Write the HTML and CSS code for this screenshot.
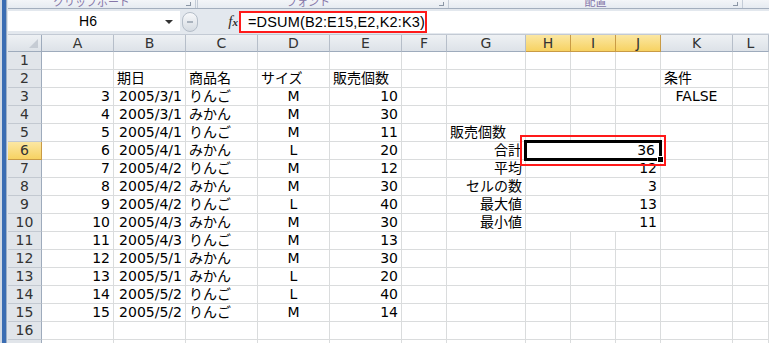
FILE: index.html
```html
<!DOCTYPE html>
<html lang="ja">
<head>
    <meta charset="UTF-8">
    <title>DSUM</title>
    <link rel="stylesheet" href="styles.css">
</head>
<body>
<div class="window">
    <div class="edge"></div>
    <div class="main">
        <!-- リボンの下端（グループ名が半分見えている） -->
        <div class="ribbon">
            <div class="group g1"><span class="label">クリップボード</span><span class="launcher"></span></div>
            <div class="group g2"><span class="label">フォント</span><span class="launcher"></span></div>
            <div class="group g3"><span class="label">配置</span><span class="launcher"></span></div>
            <div class="group g4"></div>
        </div>

        <!-- 数式バー -->
        <div class="fbar">
            <div class="namebox">H6<span class="arrow"></span></div>
            <div class="knob"><span></span></div>
            <div class="fx"><i>f</i><i class="x">x</i></div>
            <div class="formula">=DSUM(B2:E15,E2,K2:K3)<span class="callout"></span></div>
        </div>

        <!-- シート -->
        <div class="sheet">
            <div class="corner"></div><div class="hd">A</div><div class="hd">B</div><div class="hd">C</div><div class="hd">D</div><div class="hd">E</div><div class="hd">F</div><div class="hd">G</div><div class="hd sel">H</div><div class="hd sel">I</div><div class="hd sel">J</div><div class="hd">K</div><div class="hd">L</div>

            <div class="rh">1</div><div class="c"></div><div class="c"></div><div class="c"></div><div class="c"></div><div class="c"></div><div class="c"></div><div class="c"></div><div class="c"></div><div class="c"></div><div class="c"></div><div class="c"></div><div class="c"></div>
            <div class="rh">2</div><div class="c"></div><div class="c">期日</div><div class="c">商品名</div><div class="c">サイズ</div><div class="c">販売個数</div><div class="c"></div><div class="c"></div><div class="c"></div><div class="c"></div><div class="c"></div><div class="c">条件</div><div class="c"></div>
            <div class="rh">3</div><div class="c r">3</div><div class="c r">2005/3/1</div><div class="c">りんご</div><div class="c m">M</div><div class="c r">10</div><div class="c"></div><div class="c"></div><div class="c"></div><div class="c"></div><div class="c"></div><div class="c m">FALSE</div><div class="c"></div>
            <div class="rh">4</div><div class="c r">4</div><div class="c r">2005/3/1</div><div class="c">みかん</div><div class="c m">M</div><div class="c r">30</div><div class="c"></div><div class="c"></div><div class="c"></div><div class="c"></div><div class="c"></div><div class="c"></div><div class="c"></div>
            <div class="rh">5</div><div class="c r">5</div><div class="c r">2005/4/1</div><div class="c">りんご</div><div class="c m">M</div><div class="c r">11</div><div class="c"></div><div class="c">販売個数</div><div class="c"></div><div class="c"></div><div class="c"></div><div class="c"></div><div class="c"></div>
            <div class="rh sel">6</div><div class="c r">6</div><div class="c r">2005/4/1</div><div class="c">みかん</div><div class="c m">L</div><div class="c r">20</div><div class="c"></div><div class="c r">合計</div><div class="c r span active">36<span class="callout"></span></div><div class="c"></div><div class="c"></div>
            <div class="rh">7</div><div class="c r">7</div><div class="c r">2005/4/2</div><div class="c">りんご</div><div class="c m">M</div><div class="c r">12</div><div class="c"></div><div class="c r">平均</div><div class="c r span">12</div><div class="c"></div><div class="c"></div>
            <div class="rh">8</div><div class="c r">8</div><div class="c r">2005/4/2</div><div class="c">みかん</div><div class="c m">M</div><div class="c r">30</div><div class="c"></div><div class="c r">セルの数</div><div class="c r span">3</div><div class="c"></div><div class="c"></div>
            <div class="rh">9</div><div class="c r">9</div><div class="c r">2005/4/2</div><div class="c">りんご</div><div class="c m">L</div><div class="c r">40</div><div class="c"></div><div class="c r">最大値</div><div class="c r span">13</div><div class="c"></div><div class="c"></div>
            <div class="rh">10</div><div class="c r">10</div><div class="c r">2005/4/3</div><div class="c">みかん</div><div class="c m">M</div><div class="c r">30</div><div class="c"></div><div class="c r">最小値</div><div class="c r span">11</div><div class="c"></div><div class="c"></div>
            <div class="rh">11</div><div class="c r">11</div><div class="c r">2005/4/3</div><div class="c">りんご</div><div class="c m">M</div><div class="c r">13</div><div class="c"></div><div class="c"></div><div class="c"></div><div class="c"></div><div class="c"></div><div class="c"></div><div class="c"></div>
            <div class="rh">12</div><div class="c r">12</div><div class="c r">2005/5/1</div><div class="c">みかん</div><div class="c m">M</div><div class="c r">30</div><div class="c"></div><div class="c"></div><div class="c"></div><div class="c"></div><div class="c"></div><div class="c"></div><div class="c"></div>
            <div class="rh">13</div><div class="c r">13</div><div class="c r">2005/5/1</div><div class="c">みかん</div><div class="c m">L</div><div class="c r">20</div><div class="c"></div><div class="c"></div><div class="c"></div><div class="c"></div><div class="c"></div><div class="c"></div><div class="c"></div>
            <div class="rh">14</div><div class="c r">14</div><div class="c r">2005/5/2</div><div class="c">りんご</div><div class="c m">L</div><div class="c r">40</div><div class="c"></div><div class="c"></div><div class="c"></div><div class="c"></div><div class="c"></div><div class="c"></div><div class="c"></div>
            <div class="rh">15</div><div class="c r">15</div><div class="c r">2005/5/2</div><div class="c">りんご</div><div class="c m">M</div><div class="c r">14</div><div class="c"></div><div class="c"></div><div class="c"></div><div class="c"></div><div class="c"></div><div class="c"></div><div class="c"></div>
            <div class="rh">16</div><div class="c"></div><div class="c"></div><div class="c"></div><div class="c"></div><div class="c"></div><div class="c"></div><div class="c"></div><div class="c"></div><div class="c"></div><div class="c"></div><div class="c"></div><div class="c"></div>
            <div class="rh">17</div><div class="c"></div><div class="c"></div><div class="c"></div><div class="c"></div><div class="c"></div><div class="c"></div><div class="c"></div><div class="c"></div><div class="c"></div><div class="c"></div><div class="c"></div><div class="c"></div>
        </div>
    </div>
</div>
</body>
</html>
```

FILE: styles.css
```css
body {
    margin: 0;
    background: #fff;
    overflow: hidden;
    font-family: "Liberation Sans", "Noto Sans CJK JP", sans-serif;
    font-size: 14.5px;
    color: #000;
}
.window {
    display: flex;
    height: 343px;
    overflow: hidden;
}
.edge {
    width: 8px;
    flex: none;
    background: linear-gradient(to right, #d3dbe5 0 2px, #3b6db3 2px 6px, #9fb0c6 6px 7px, #dfe5ec 7px);
}
.main {
    flex: 1;
    min-width: 0;
}

/* リボン */
.ribbon {
    height: 8px;
    display: flex;
    overflow: hidden;
    background: linear-gradient(#f3f5f8, #e6ebf1);
    border-bottom: 1px solid #a3aebd;
}
.group {
    position: relative;
    overflow: hidden;
    text-align: center;
    border-right: 1px solid #c4ccd7;
    font-size: 11px;
}
.g1 { width: 187px; border-right: 3px double #c4ccd7; }
.g2 { width: 250px; }
.g3 { width: 293px; }
.g4 { flex: 1; border-right: 0; }
.label {
    display: block;
    height: 8px;
    overflow: hidden;
    line-height: 4px;
    color: #8576a8;
}
.g1 .label { padding-right: 20px; }
.g2 .label { padding-right: 30px; }
.launcher {
    position: absolute;
    right: 4px;
    bottom: 2px;
    width: 4px;
    height: 3px;
    border-right: 1px solid #8c97a6;
    border-bottom: 1px solid #8c97a6;
}

/* 数式バー */
.fbar {
    height: 26px;
    box-sizing: border-box;
    display: flex;
    padding-top: 2px;
    background: #e3e8ee;
    border-bottom: 1px solid #c3cad4;
}
.namebox {
    position: relative;
    width: 172px;
    height: 20px;
    padding-right: 12px;
    box-sizing: border-box;
    background: #fff;
    font-size: 14px;
    line-height: 20px;
    text-align: center;
}
.arrow {
    position: absolute;
    right: 7px;
    top: 9px;
    border-left: 4px solid transparent;
    border-right: 4px solid transparent;
    border-top: 4px solid #333;
}
.knob {
    width: 14px;
    height: 18px;
    margin: 1px 0 0 2px;
    border: 1px solid #b4bdc8;
    border-radius: 9px;
    background: linear-gradient(#f7f8fa, #d5dbe2);
    display: flex;
    align-items: center;
    justify-content: center;
}
.knob span {
    width: 6px;
    height: 2px;
    background: #a9b2bd;
}
.fx {
    width: 40px;
    padding-right: 1px;
    text-align: right;
    font-family: "Liberation Serif", serif;
    font-size: 15px;
    line-height: 20px;
    color: #2a2a2a;
}
.fx .x {
    font-size: 11px;
    font-weight: bold;
}
.formula {
    position: relative;
    flex: 1;
    height: 22px;
    background: #fff;
    padding-left: 9px;
    line-height: 22px;
    font-size: 14.5px;
    letter-spacing: 0.15px;
}
.callout {
    position: absolute;
    border: 2px solid #ff1a1a;
    box-sizing: border-box;
}
.formula .callout {
    left: 0;
    top: 0;
    width: 188px;
    height: 22px;
}

/* シート */
.sheet {
    display: grid;
    grid-template-columns: 34px 72px 72px 72px 72px 72px 45px 79px 45px 45px 45px 72px 36px;
    grid-template-rows: 17px;
    grid-auto-rows: 18px;
    font-family: "DejaVu Sans", "Noto Sans CJK JP", sans-serif;
    font-size: 14px;
}
.corner, .hd, .rh {
    background: linear-gradient(#eef1f4, #dde2e8);
    color: #333;
    text-align: center;
    box-sizing: border-box;
}
.corner {
    position: relative;
    border-right: 1px solid #9eabbc;
    border-bottom: 1px solid #9eabbc;
}
.corner::after {
    content: "";
    position: absolute;
    right: 3px;
    bottom: 3px;
    border-left: 9px solid transparent;
    border-bottom: 9px solid #c6ccd4;
}
.hd {
    line-height: 16px;
    border-right: 1px solid #b6bec9;
    border-bottom: 1px solid #9eabbc;
}
.rh {
    line-height: 17px;
    background: #e1e5ea;
    border-right: 1px solid #9eabbc;
    border-bottom: 1px solid #c3c9d1;
}
.hd.sel, .rh.sel {
    background: linear-gradient(#fbe7a3, #f7d262);
    border-color: #c99b45;
}
.c {
    box-sizing: border-box;
    padding: 0 3px;
    line-height: 17px;
    white-space: nowrap;
    border-right: 1px solid #dadcdd;
    border-bottom: 1px solid #dadcdd;
}
.r { text-align: right; }
.m { text-align: center; }
.span { grid-column: span 3; }

/* アクティブセル */
.active {
    position: relative;
    padding-right: 5px;
}
.active::before {
    content: "";
    position: absolute;
    top: -2px;
    left: -2px;
    right: -2px;
    bottom: -2px;
    border: 3px solid #000;
}
.active::after {
    content: "";
    position: absolute;
    right: -3px;
    bottom: -3px;
    width: 5px;
    height: 5px;
    background: #000;
    box-shadow: 0 0 0 1px #fff;
}
.active .callout {
    top: -7px;
    left: -6px;
    right: -6px;
    bottom: -7px;
}
```
